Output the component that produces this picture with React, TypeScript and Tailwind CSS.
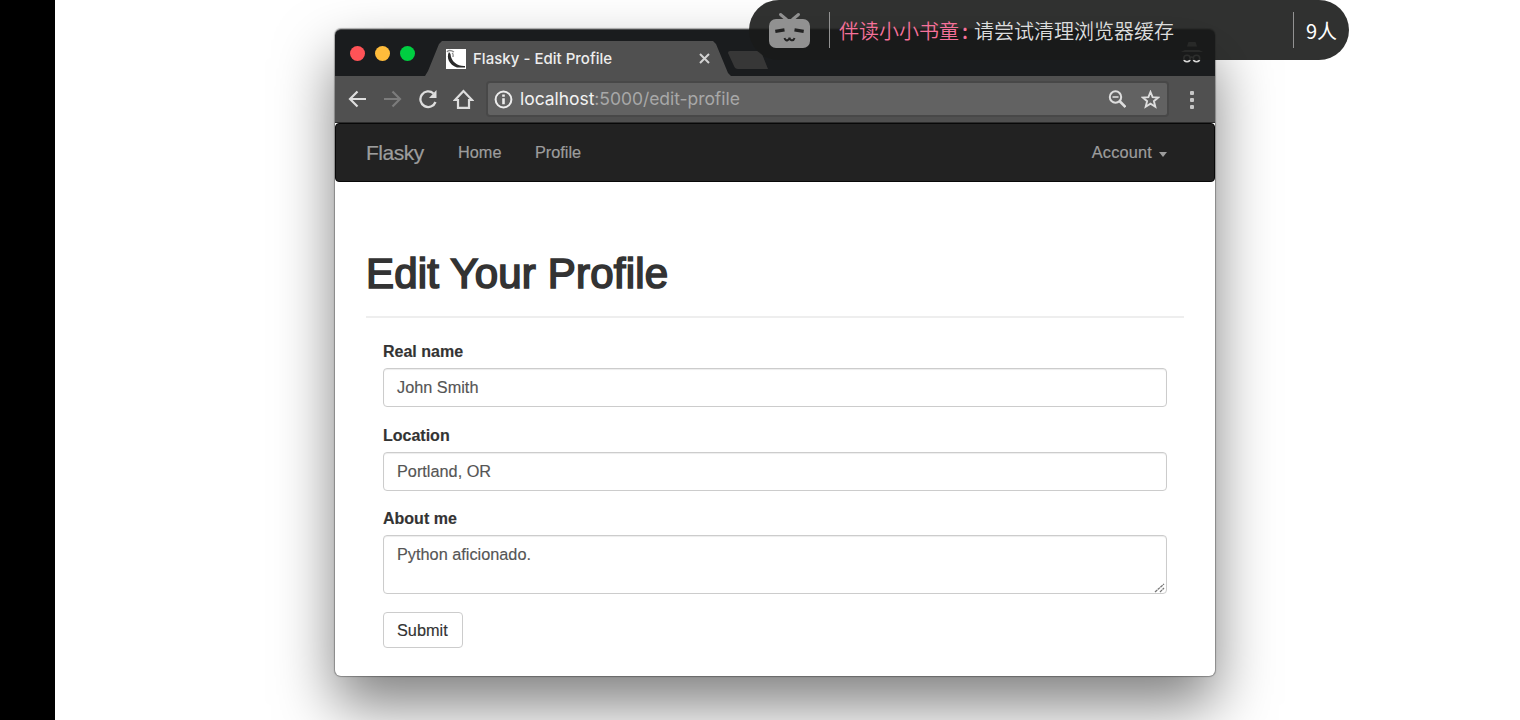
import React from "react";

const helv = "font-['Liberation_Sans',Arial,sans-serif]";

function BrowserTabs() {
  return (
    <div className="flex h-[47px] shrink-0 items-start rounded-t-[6px] border-t border-[#4b4c4d] bg-[#1a1c1e]">
      <div className="flex gap-[10px] pl-[15px] pt-[16px]">
        <span className="size-[15px] rounded-full bg-[#ff5357]" />
        <span className="size-[15px] rounded-full bg-[#ffbc3b]" />
        <span className="size-[15px] rounded-full bg-[#00ce41]" />
      </div>
      <div className="ml-[10px] mt-[11px] flex h-[35px] w-[306px] items-center bg-[#505050] pl-[21px] [clip-path:polygon(0_100%,3px_30px,14px_3px,17px_0,288px_0,291px_3px,303px_32px,306px_100%)]">
        <svg className="size-[20px] shrink-0" viewBox="0 0 20 20">
          <path d="M0 0h20v20H0z" fill="#fff" />
          <path d="M1 3C2 1 5 1 8 3M6 4c2 1 1 2 1 4" fill="none" stroke="#8a8a8a" strokeWidth="1.300" />
          <path d="M3 3C0 8 3 16 11 18.500L19 18.500V17C12 17.500 5 13 4.500 5z" fill="#2b2b2b" />
        </svg>
        <span className="ml-[7px] w-[226px] whitespace-nowrap font-['Inter',sans-serif] text-[15px] font-medium leading-[20px] tracking-[0.02px] text-[#ededed]">
          Flasky - Edit Profile
        </span>
        <svg className="size-[11px] shrink-0" viewBox="0 0 11 11">
          <path d="M1 1l9 9M10 1l-9 9" stroke="#d2d2d2" strokeWidth="2" />
        </svg>
      </div>
      <svg className="mt-[21px] ml-[-4px] h-[18px] w-[42px]" viewBox="0 0 42 18">
        <path d="M3 0H30Q33 0 35 3L41 18H11Q8 18 7 15L1 2Q1 0 3 0z" fill="#373737" />
      </svg>
      <svg className="ml-auto mr-[12px] mt-[12px] h-[22px] w-[22px]" viewBox="0 0 22 22" fill="none" stroke="#d8d8d8">
        <path d="M6 4.500l1.500-4.500h7l1.500 4.500zM0 10l4-2h14l4 2z" fill="#b0b0b0" stroke="none" />
        <circle cx="6" cy="16.500" r="3.200" strokeWidth="1.500" />
        <circle cx="15.500" cy="16.500" r="3.200" strokeWidth="1.500" />
        <path d="M9 15.500q1.500-1 3 0" strokeWidth="1.500" />
      </svg>
    </div>
  );
}

function Toolbar() {
  return (
    <div className="flex h-[47px] shrink-0 items-start border-b border-[#2c2c2c] bg-[#505050] pt-[5px]">
      <svg className="ml-[12px] mt-[8px] size-[20px]" viewBox="0 0 20 20" fill="none" stroke="#dedede" strokeWidth="2.200">
        <path d="M19 10H3M10.500 2.500L3 10l7.500 7.500" />
      </svg>
      <svg className="ml-[16px] mt-[8px] size-[20px]" viewBox="0 0 20 20" fill="none" stroke="#7c7c7c" strokeWidth="2.200">
        <path d="M1 10h16M9.500 2.500L17 10l-7.500 7.500" />
      </svg>
      <svg className="ml-[15px] mt-[8px] size-[20px]" viewBox="0 0 20 20">
        <path d="M17.500 13A7.800 7.800 0 1 1 15.500 4.500" fill="none" stroke="#dedede" strokeWidth="2.300" />
        <path d="M18.500 1v8H11z" fill="#dedede" />
      </svg>
      <svg className="ml-[15px] mt-[8px] size-[21px]" viewBox="0 0 21 21" fill="none" stroke="#dedede" strokeWidth="2.200">
        <path d="M10.500 2L2 11h3v7.800h11V11h3z" />
      </svg>
      <div className="ml-[12px] flex h-[36px] w-[683px] items-center rounded-[4px] border-2 border-[#484848] bg-[#626262] pl-[6px]">
        <svg className="size-[19px]" viewBox="0 0 19 19">
          <circle cx="9.500" cy="9.500" r="7.900" fill="none" stroke="#ededed" strokeWidth="2" />
          <path d="M8.200 4.500h2.600v2.300H8.200zM8.200 8.200h2.600v6H8.200z" fill="#ededed" />
        </svg>
        <span className="ml-[7px] whitespace-nowrap font-['Inter',sans-serif] text-[17.500px] leading-[24px] tracking-[-0.05px] text-[#a8a8a8]">
          <span className="text-[#f2f2f2]">localhost</span>:5000/edit-profile
        </span>
        <svg className="ml-auto size-[18px]" viewBox="0 0 18 18" fill="none" stroke="#dedede">
          <circle cx="7.500" cy="7" r="5.700" strokeWidth="2" />
          <path d="M11.500 11l6 6" strokeWidth="2.600" />
          <path d="M4.500 7h6" strokeWidth="1.600" />
        </svg>
        <svg className="ml-[15px] mr-[7px] size-[19px]" viewBox="0 0 19 19">
          <path d="M9.500 2l2.100 5.200 5.600.4-4.300 3.600 1.400 5.500-4.800-3-4.800 3 1.400-5.500L1.800 7.600l5.600-.4z" fill="none" stroke="#dedede" strokeWidth="1.900" />
        </svg>
      </div>
      <div className="ml-[21px] mt-[10px] flex flex-col gap-[3px]">
        <span className="size-[4px] rounded-[1px] bg-[#c6c6c6]" />
        <span className="size-[4px] rounded-[1px] bg-[#c6c6c6]" />
        <span className="size-[4px] rounded-[1px] bg-[#c6c6c6]" />
      </div>
    </div>
  );
}

function Navbar() {
  return (
    <nav className="flex h-[59px] shrink-0 items-center rounded-[4px] border border-[#080808] bg-[#222] pl-[30px] pr-[47px] text-[16.300px] text-[#9d9d9d] [-webkit-text-stroke:0.2px]">
      <span className="w-[92px] whitespace-nowrap text-[21px] tracking-[-0.500px]">Flasky</span>
      <span className="w-[77px]">Home</span>
      <span>Profile</span>
      <span className="ml-auto tracking-[0.200px]">Account</span>
      <span className="ml-[7px] mt-[3px] border-x-[4.500px] border-t-[5px] border-x-transparent border-t-[#9d9d9d]" />
    </nav>
  );
}

function Field({ label, value }: { label: string; value: string }) {
  return (
    <div className="mb-[17.500px]">
      <div className="mb-[5px] h-[22px] text-[16px] font-bold leading-[22px] text-[#333]">{label}</div>
      <div className="h-[39px] rounded-[4px] border-[1.500px] border-[#ccc] pl-[13px] text-[16.300px] leading-[37px] text-[#555] shadow-[inset_0_1px_1px_rgba(0,0,0,0.075)]">
        {value}
      </div>
    </div>
  );
}

function ProfileForm() {
  return (
    <main className="px-[31px] [-webkit-text-stroke:0.15px]">
      <h1 className="mt-[67px] h-[50px] whitespace-nowrap text-[42px] font-normal leading-[50px] tracking-[0.200px] text-[#333] [-webkit-text-stroke:1.700px_#333]">
        Edit Your Profile
      </h1>
      <hr className="mt-[17px] border-t-2 border-[#eee]" />
      <div className="mt-[23px] px-[17px]">
        <Field label="Real name" value="John Smith" />
        <Field label="Location" value="Portland, OR" />
        <div className="mb-[5px] h-[22px] text-[16px] font-bold leading-[22px] text-[#333]">About me</div>
        <div className="flex h-[59px] justify-between rounded-[4px] border-[1.500px] border-[#ccc] pl-[13px] text-[16.300px] leading-[37px] text-[#555] shadow-[inset_0_1px_1px_rgba(0,0,0,0.075)]">
          <span>Python aficionado.</span>
          <svg className="mr-px size-[11px] self-end" viewBox="0 0 11 11" stroke="#777" strokeWidth="1.300">
            <path d="M1 10l9-8M6 10l4-4" strokeDasharray="3 .6" />
          </svg>
        </div>
        <div className="mt-[18px] flex h-[36px] w-[80px] items-center rounded-[4px] border-[1.500px] border-[#ccc] pl-[13px] text-[16.300px] text-[#333]">
          Submit
        </div>
      </div>
    </main>
  );
}

function LiveBar() {
  return (
    <div className="absolute left-[749px] top-0 flex h-[60px] w-[600px] items-center rounded-[30px] bg-[#191b1a]/90 pl-[20px] font-['Noto_Sans_CJK_SC',sans-serif] text-[20px] font-[350] leading-[30px]">
      <svg className="h-[36px] w-[41px]" viewBox="0 0 41 36">
        <path d="M11.500 2.500l6 5M29.500 2.500l-6 5" stroke="#919191" strokeWidth="3" strokeLinecap="round" />
        <rect y="7" width="41" height="29" rx="7" fill="#919191" />
        <path d="M6.300 19.300l9.200-1.500M25.500 17.800l9.200 1.500" stroke="#222" strokeWidth="3.200" />
        <path d="M15.500 26q1 3 3 2.200 1.800-.5 2-2.700.3 2.500 2 2.700 2.200.5 3-2.200" fill="none" stroke="#222" strokeWidth="2" />
      </svg>
      <span className="ml-[19px] h-[36px] w-px bg-[#929292]" />
      <span className="ml-[9px] mt-[2px] whitespace-nowrap text-[#f5719a]">伴读小小书童</span>
      <span className="flex w-[15px] flex-col gap-[7px] pl-[3px] pt-[5px] text-[#f5719a]">
        <span className="mt-[-3px] h-[26px] font-medium leading-[26px]">:</span>
      </span>
      <span className="mt-[2px] whitespace-nowrap text-[#dcdddd]">请尝试清理浏览器缓存</span>
      <span className="ml-auto h-[36px] w-px bg-[#929292]" />
      <span className="ml-[12px] mr-[12px] mt-[1px] whitespace-nowrap font-normal text-white">9人</span>
    </div>
  );
}

export default function App() {
  return (
    <div className={`relative flex h-[720px] w-[1520px] overflow-hidden bg-white ${helv}`}>
      <aside className="w-[55px] shrink-0 bg-black" />
      <section className="ml-[280px] mt-[29px] flex h-[647px] w-[880px] flex-col rounded-[6px] bg-white shadow-[0_0_1px_1px_rgba(0,0,0,0.3),0_29px_58px_rgba(0,0,0,0.5)]">
        <BrowserTabs />
        <Toolbar />
        <Navbar />
        <ProfileForm />
      </section>
      <LiveBar />
    </div>
  );
}
